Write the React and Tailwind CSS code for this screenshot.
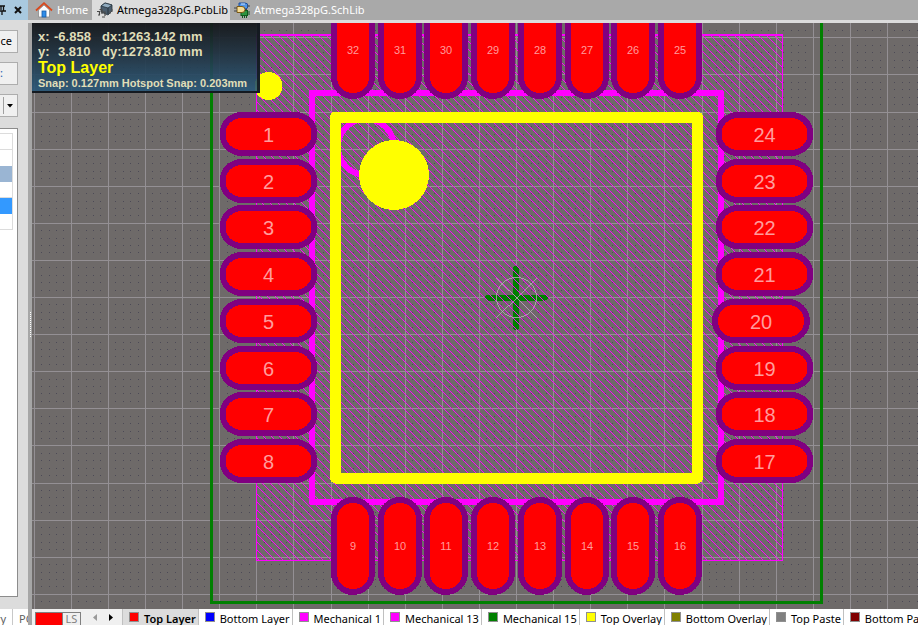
import React from "react";

const PITCH = 37.1;
const ORIGIN = { x: 516, y: 297 };
const PAD_PITCH = 46.7;

const range = (from, to) => Array.from({ length: to - from + 1 }, (_, i) => from + i);
const at = (origin, n) => Math.round(origin + n * PITCH);

const COLS = range(-13, 40);
const ROWS = range(-8, 30);
const SUB = [1, 2, 3, 4];

const layers = [
  { name: "Top Layer", color: "bg-[#ff0000]", active: true },
  { name: "Bottom Layer", color: "bg-[#0000ff]" },
  { name: "Mechanical 1", color: "bg-[#ff00ff]" },
  { name: "Mechanical 13", color: "bg-[#ff00ff]" },
  { name: "Mechanical 15", color: "bg-[#008000]" },
  { name: "Top Overlay", color: "bg-[#ffff00]" },
  { name: "Bottom Overlay", color: "bg-[#808000]" },
  { name: "Top Paste", color: "bg-[#808080]" },
  { name: "Bottom Paste", color: "bg-[#800000]" },
];

function Pad({ cx, cy, n, vertical }) {
  const w = vertical ? 44 : 98;
  const h = vertical ? 98 : 44;
  return (
    <g>
      <g shapeRendering="crispEdges">
        <rect x={cx - w / 2} y={cy - h / 2} width={w} height={h} rx="22" fill="#800080" />
        <rect x={cx - w / 2 + 6} y={cy - h / 2 + 6} width={w - 12} height={h - 12} rx="16" fill="#ff0000" />
      </g>
      <text
        x={cx}
        y={vertical ? cy + 4 : cy + 8}
        textAnchor="middle"
        fill="#ff9c9c"
        className={vertical ? "text-[11px]" : "text-[20px]"}
      >
        {n}
      </text>
    </g>
  );
}

function Grid() {
  const dots = [];
  COLS.forEach((c) =>
    SUB.forEach((s) => {
      const x = Math.round(ORIGIN.x + (c + s / 5) * PITCH);
      ROWS.forEach((r) =>
        SUB.forEach((t) => {
          const y = Math.round(ORIGIN.y + (r + t / 5) * PITCH);
          dots.push(`M${x} ${y}h1v1h-1z`);
        })
      );
    })
  );
  return (
    <g shapeRendering="crispEdges">
      <path d={dots.join("")} fill="#4c4a56" />
      {COLS.map((c) => (
        <rect key={`c${c}`} x={at(ORIGIN.x, c)} y="0" width="1" height="1400" fill="#949094" />
      ))}
      {ROWS.map((r) => (
        <rect key={`r${r}`} x="0" y={at(ORIGIN.y, r)} width="2000" height="1" fill="#949094" />
      ))}
    </g>
  );
}

function Hatch() {
  const lines = range(-66, 66).map((k) => {
    const c = 219 + k * 8;
    return `M${c + 34.5} 35h1l526 526h-1z`;
  });
  return (
    <g shapeRendering="crispEdges">
      <clipPath id="courtyard">
        <rect x="256" y="35" width="527" height="526" />
      </clipPath>
      <path d={lines.join("")} fill="#ff00ff" clipPath="url(#courtyard)" />
    </g>
  );
}

function Footprint() {
  const steps = range(0, 7);
  return (
    <svg className="block h-full w-full font-['Liberation_Sans',sans-serif]" role="img" aria-label="Atmega328pG footprint">
      <g transform="translate(-32 -23)">
        <Grid />
        <g shapeRendering="crispEdges" fill="none">
          <path d="M516 269V327M488 297.5H545" stroke="#008000" strokeWidth="6" strokeLinecap="round" />
        </g>
        <Hatch />
        <g shapeRendering="crispEdges" fill="none">
          <rect x="211.5" y="-40.5" width="610" height="643" stroke="#008000" strokeWidth="3" />
          <path d="M256.5 35V560.5H782.5V35" stroke="#ff00ff" strokeWidth="1" />
          <path d="M256 35H783" stroke="#ff00ff" strokeWidth="2" />
          <rect x="312" y="93" width="409" height="409" stroke="#ff00ff" strokeWidth="6" strokeLinejoin="round" />
          <circle cx="366" cy="147" r="28" stroke="#ff00ff" strokeWidth="6" />
          <rect x="335.5" y="117" width="362" height="361" stroke="#ffff00" strokeWidth="11" strokeLinejoin="round" />
        </g>
        <g stroke="#b4b0b4" fill="none" shapeRendering="crispEdges" strokeWidth="0.8">
          <circle cx="516.5" cy="297.5" r="20" />
          <path d="M496.5 277.5L536.5 317.5M536.5 277.5L496.5 317.5" />
        </g>
        <g fill="#ffff00" shapeRendering="crispEdges">
          <circle cx="268.5" cy="86" r="14" />
          <circle cx="394" cy="175" r="35" />
        </g>
        {steps.map((i) => (
          <Pad key={`t${i}`} n={32 - i} cx={Math.round(353 + i * PAD_PITCH)} cy={50} vertical />
        ))}
        {steps.map((i) => (
          <Pad key={`b${i}`} n={9 + i} cx={Math.round(353 + i * PAD_PITCH)} cy={546} vertical />
        ))}
        {steps.map((i) => (
          <Pad key={`l${i}`} n={1 + i} cx={268.5} cy={Math.round(134 + i * PAD_PITCH)} />
        ))}
        {steps.map((i) => (
          <Pad key={`r${i}`} n={24 - i} cx={i === 4 ? 761 : 764.5} cy={Math.round(134 + i * PAD_PITCH)} />
        ))}
      </g>
    </svg>
  );
}

function HomeIcon() {
  return (
    <svg width="18" height="16" viewBox="0 0 18 16" aria-hidden="true">
      <path d="M3.5 8v7h11V8L9 3z" fill="#fbfbfb" stroke="#8a8a8a" strokeWidth="0.8" />
      <path d="M1 8.5L9 1.2l8 7.3" fill="none" stroke="#d9481c" strokeWidth="1.8" />
      <rect x="7" y="9" width="4" height="6" fill="#2f8ce8" stroke="#165ca8" strokeWidth="0.8" />
    </svg>
  );
}

function PcbIcon() {
  return (
    <svg width="17" height="16" viewBox="0 0 17 16" aria-hidden="true">
      <path d="M5 4l4-3 7 2v6l-4 4-7-3z" fill="#4b5d6d" stroke="#27333d" strokeWidth="0.8" />
      <path d="M5 4l4-3 7 2-4 3z" fill="#8fa9bd" stroke="#27333d" strokeWidth="0.8" />
      <path d="M12 6v6" stroke="#27333d" />
      <path d="M1 9.500h2.500v3M3.500 7.500H6v4.500M6.500 10H9v4M2 13h2M6 15h3" fill="none" stroke="#4a4a4a" strokeWidth="1.200" />
      <path d="M14 9v3M16 7v3" stroke="#555" />
    </svg>
  );
}

function SchIcon() {
  return (
    <svg width="16" height="16" viewBox="0 0 16 16" aria-hidden="true">
      <path d="M5 1h6a3 3 0 0 1 0 6H5z" fill="#4f93e6" stroke="#1c4f9c" />
      <path d="M7 2h4" stroke="#c5e0ff" />
      <rect x="7" y="8.500" width="6.500" height="5" fill="#2c9440" stroke="#0d5a1d" />
      <path d="M8.500 13v3M10.500 13v3M12.500 13v3M14 10h2M14 12h2" stroke="#0d5a1d" />
      <path d="M3 4.500h5a3 3 0 0 1 0 6H3z" fill="#f5dc95" stroke="#7b5a16" />
      <path d="M0 6h3M0 9h3M11 7.500h2M13 4h3" stroke="#444" />
    </svg>
  );
}

function DocumentTabs() {
  const tab = "flex h-5 items-center gap-1 whitespace-nowrap";
  return (
    <nav className="flex h-[23px] shrink-0 items-start border-b-[3px] border-[#dcdcdc] bg-[#a9a9a9] text-[11px] leading-4" aria-label="Documents">
      <button className={`${tab} w-16 pl-[7px] text-white`}><HomeIcon />Home</button>
      <button className={`${tab} w-[138px] bg-[#dcdcdc] pl-1 text-black`} aria-current="page"><PcbIcon />Atmega328pG.PcbLib</button>
      <button className={`${tab} pl-1 text-white`}><SchIcon />Atmega328pG.SchLib</button>
    </nav>
  );
}

function HeadsUp() {
  return (
    <div className="absolute left-0 top-0 h-[70px] w-[228px] border-r-[3px] border-b-2 border-[#141a20]/90 bg-linear-to-b from-[#15181b]/95 to-[#28587a]/90 pl-1.5 pt-1.5 font-['Liberation_Sans',sans-serif] font-bold text-[#e0deb8] whitespace-nowrap">
      <dl className="text-[13px] leading-[15px]">
        <div className="flex"><dt className="w-4">x:</dt><dd className="w-12">-6.858</dd><dd>dx:1263.142 mm</dd></div>
        <div className="flex"><dt className="w-5">y:</dt><dd className="w-11">3.810</dd><dd>dy:1273.810 mm</dd></div>
      </dl>
      <p className="text-[16px] leading-[17px] text-[#ffff00]">Top Layer</p>
      <p className="text-[11px] leading-[14px]">Snap: 0.127mm Hotspot Snap: 0.203mm</p>
    </div>
  );
}

function SidePanel() {
  const btn = "flex h-[23px] w-[18px] items-center border border-l-0 border-[#adadad] bg-[#f0f0f0]";
  return (
    <aside className="flex w-7 shrink-0 flex-col overflow-hidden bg-[#dcdcdc] text-[11px]">
      <header className="flex h-5 shrink-0 items-center justify-between bg-[#a9c9df] pr-1.5">
        <button aria-label="Pin">
          <svg width="7" height="10" viewBox="0 0 7 10"><path d="M0 1h5M1 1v4M3.500 1v5M0 6h6M2 6v4" stroke="#111" strokeWidth="1.300" fill="none" /></svg>
        </button>
        <button aria-label="Close">
          <svg width="8" height="8" viewBox="0 0 8 8"><path d="M1 1l6 6M7 1L1 7" stroke="#111" strokeWidth="2" /></svg>
        </button>
      </header>
      <div className="flex flex-col gap-[9px] pt-2.5">
        <button className={`${btn} justify-end pr-[5px]`}>ce</button>
        <button className={`${btn} text-[#1c5fae]`}>:</button>
        <button className={`${btn} justify-end pr-[3px]`} aria-label="More options">
          <span className="mr-[3px] h-[17px] w-px bg-[#a0a0a0]" />
          <svg width="7" height="4" viewBox="0 0 7 4"><path d="M0 0h6L3 3.500z" fill="#000" /></svg>
        </button>
      </div>
      <div className="mt-[11px] w-[18px] flex-1 border-t border-r border-b border-[#8c8c8c] bg-white pt-1">
        <ul className="w-[13px] border-t border-r border-[#dcdcdc]">
          <li className="h-4 border-b border-[#dcdcdc]" />
          <li className="h-4" />
          <li className="h-4 bg-[#9ab5d3]" />
          <li className="h-4 border-b border-[#dcdcdc]" />
          <li className="h-4 bg-[#3399ff]" />
          <li className="h-4 border-b border-[#dcdcdc]" />
        </ul>
      </div>
      <nav className="mt-3 flex h-4 shrink-0 items-center bg-white leading-4 text-[#606060]" aria-label="Panels">
        <button className="flex h-4 w-[13px] shrink-0 justify-end border-r border-[#c8c8c8] pr-1.5 pt-0.5">ry</button>
        <button className="h-4 pl-1.5 pt-0.5">PC</button>
      </nav>
    </aside>
  );
}

function LayerBar() {
  return (
    <footer className="flex h-4 shrink-0 overflow-hidden bg-[#f0f0f0] text-[11px] leading-4 whitespace-nowrap">
      <button className="ml-[3px] mt-[3px] flex h-[13px] w-[46px] shrink-0 border border-b-0 border-[#808080]" aria-label="Layer set">
        <span className="h-full w-[26px] bg-[#ff0000]" />
        <span className="flex-1 border-l border-[#808080] leading-3 text-[#808080]">LS</span>
      </button>
      <div className="flex w-[41px] shrink-0 items-center justify-between pl-3 pr-2">
        <button aria-label="Previous layer"><svg width="5" height="7" viewBox="0 0 5 7"><path d="M4 0v7L0 3.500z" fill="#9a9a9a" /></svg></button>
        <button aria-label="Next layer"><svg width="5" height="7" viewBox="0 0 5 7"><path d="M0 0v7l4-3.500z" fill="#000" /></svg></button>
      </div>
      {layers.map((l) => (
        <button
          key={l.name}
          className={`flex shrink-0 items-center gap-[5px] border-l border-[#c0c0c0] pl-1.5 pr-0.5 text-black ${l.active ? "bg-[#dcdcdc] font-semibold" : "bg-white"}`}
        >
          <span className={`size-2.5 border border-[#909090] ${l.color}`} />
          <span className="pt-1">{l.name}</span>
        </button>
      ))}
    </footer>
  );
}

export default function App() {
  return (
    <div className="flex h-screen overflow-hidden bg-[#dcdcdc] font-['Noto_Sans','Open_Sans',sans-serif]">
      <SidePanel />
      <div className="flex min-w-0 flex-1 flex-col">
        <DocumentTabs />
        <div className="flex min-h-0 flex-1">
          <div className="flex w-1 shrink-0 items-center bg-[#a6a6a6]" aria-hidden="true">
            <span className="ml-0.5 h-[25px] border-l border-dotted border-white" />
          </div>
          <div className="flex min-w-0 flex-1 flex-col">
            <main className="relative min-h-0 flex-1 overflow-hidden bg-[#6e6a69]">
              <Footprint />
              <HeadsUp />
            </main>
            <LayerBar />
          </div>
        </div>
      </div>
    </div>
  );
}
